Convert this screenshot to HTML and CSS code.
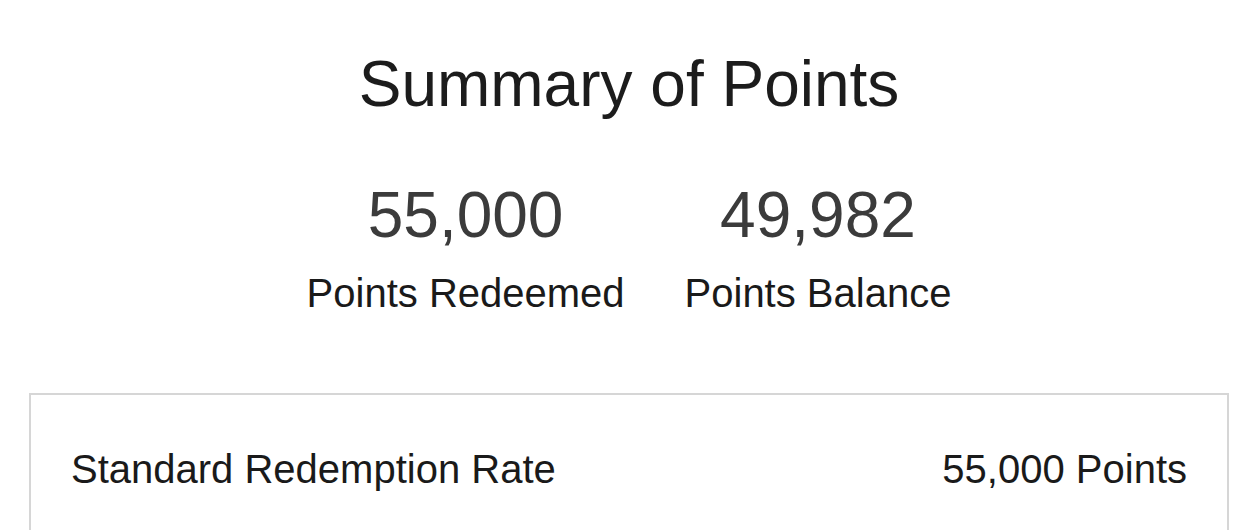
FILE: index.html
```html
<!DOCTYPE html>
<html lang="en">
  <head>
    <meta charset="UTF-8" />
    <meta name="viewport" content="width=device-width, initial-scale=1.0" />
    <title>Summary of Points</title>
    <link rel="stylesheet" href="styles.css">
  </head>
  <body>
    <div class="summary">
      <h1>Summary of Points</h1>

      <div class="stats">
        <div class="stat">
          <div class="stat-value">55,000</div>
          <div class="stat-label">Points Redeemed</div>
        </div>
        <div class="stat">
          <div class="stat-value">49,982</div>
          <div class="stat-label">Points Balance</div>
        </div>
      </div>

      <div class="rates">
        <div class="rate-row">
          <span>Standard Redemption Rate</span>
          <span>55,000 Points</span>
        </div>
      </div>
    </div>
  </body>
</html>
```

FILE: styles.css
```css
body {
  font-family: "Liberation Sans", Arial, sans-serif;
  margin: 0;
  color: #1a1a1a;
}
.summary {
  width: 1200px;
  margin-left: 29px;
  padding-top: 47px;
}
h1 {
  margin: 0;
  font-size: 64px;
  line-height: 74px;
  font-weight: normal;
  text-align: center;
  color: #1c1c1c;
}
.stats {
  display: flex;
  justify-content: center;
  gap: 60px;
  margin-top: 57px;
}
.stat {
  text-align: center;
}
.stat-value {
  font-size: 64px;
  line-height: 74px;
  color: #3b3b3b;
}
.stat-label {
  font-size: 40px;
  line-height: 46px;
  margin-top: 18px;
}
.rates {
  margin-top: 77px;
  border: 2px solid #d6d6d6;
}
.rate-row {
  display: flex;
  justify-content: space-between;
  padding: 51px 40px 40px;
  font-size: 40px;
  line-height: 46px;
}
```
